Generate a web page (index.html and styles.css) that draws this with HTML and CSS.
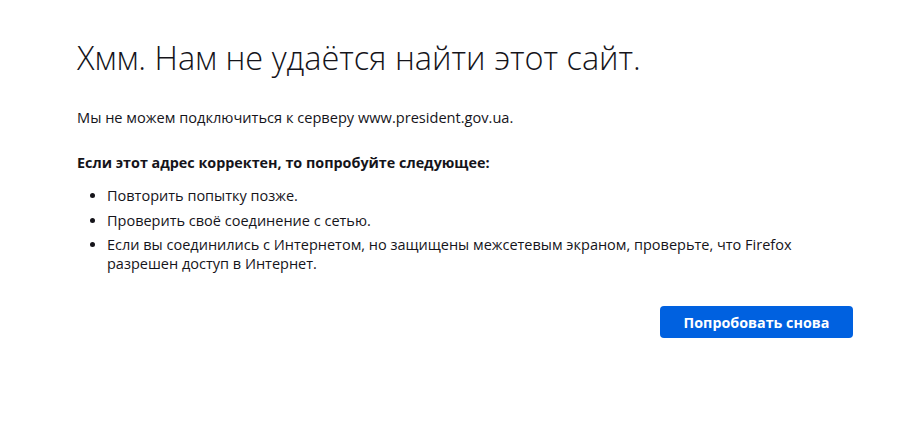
FILE: index.html
```html
<!DOCTYPE html>
<html lang="ru">
<head>
<meta charset="utf-8">
<title>Проблема при загрузке страницы</title>
<link rel="stylesheet" href="styles.css">
</head>
<body>
<main class="container">
  <h1 class="title">Хмм. Нам не удаётся найти этот сайт.</h1>
  <p class="desc">Мы не можем подключиться к серверу www.president.gov.ua.</p>
  <p class="subtitle">Если этот адрес корректен, то попробуйте следующее:</p>
  <ul class="tips">
    <li>Повторить попытку позже.</li>
    <li>Проверить своё соединение с сетью.</li>
    <li>Если вы соединились с Интернетом, но защищены межсетевым экраном, проверьте, что Firefox разрешен доступ в Интернет.</li>
  </ul>
  <div class="actions">
    <button class="retry">Попробовать снова</button>
  </div>
</main>
</body>
</html>
```
FILE: styles.css
```css
html, body {
  margin: 0;
  background: #ffffff;
}
body {
  font-family: "Open Sans", "Noto Sans", sans-serif;
  color: #15141a;
}
.container {
  width: 776px;
  padding: 34px 0 0 77px;
  box-sizing: content-box;
}
.title {
  margin: 0;
  font-size: 32.5px;
  font-weight: 300;
  line-height: 48px;
}
.desc {
  margin: 24px 0 0;
  font-size: 14.6px;
  line-height: 22px;
}
.subtitle {
  margin: 24px 0 0;
  font-size: 14.35px;
  font-weight: 700;
  line-height: 22px;
}
.tips {
  margin: 12px 0 0;
  padding-left: 30px;
  font-size: 14.5px;
  line-height: 19px;
}
.tips li {
  margin-bottom: 5.5px;
}
.actions {
  display: flex;
  justify-content: flex-end;
  margin-top: 33px;
}
.retry {
  width: 193px;
  height: 32px;
  border: none;
  border-radius: 4px;
  background: #0061e0;
  color: #fff;
  font-family: inherit;
  font-size: 14.3px;
  font-weight: 700;
}
```
